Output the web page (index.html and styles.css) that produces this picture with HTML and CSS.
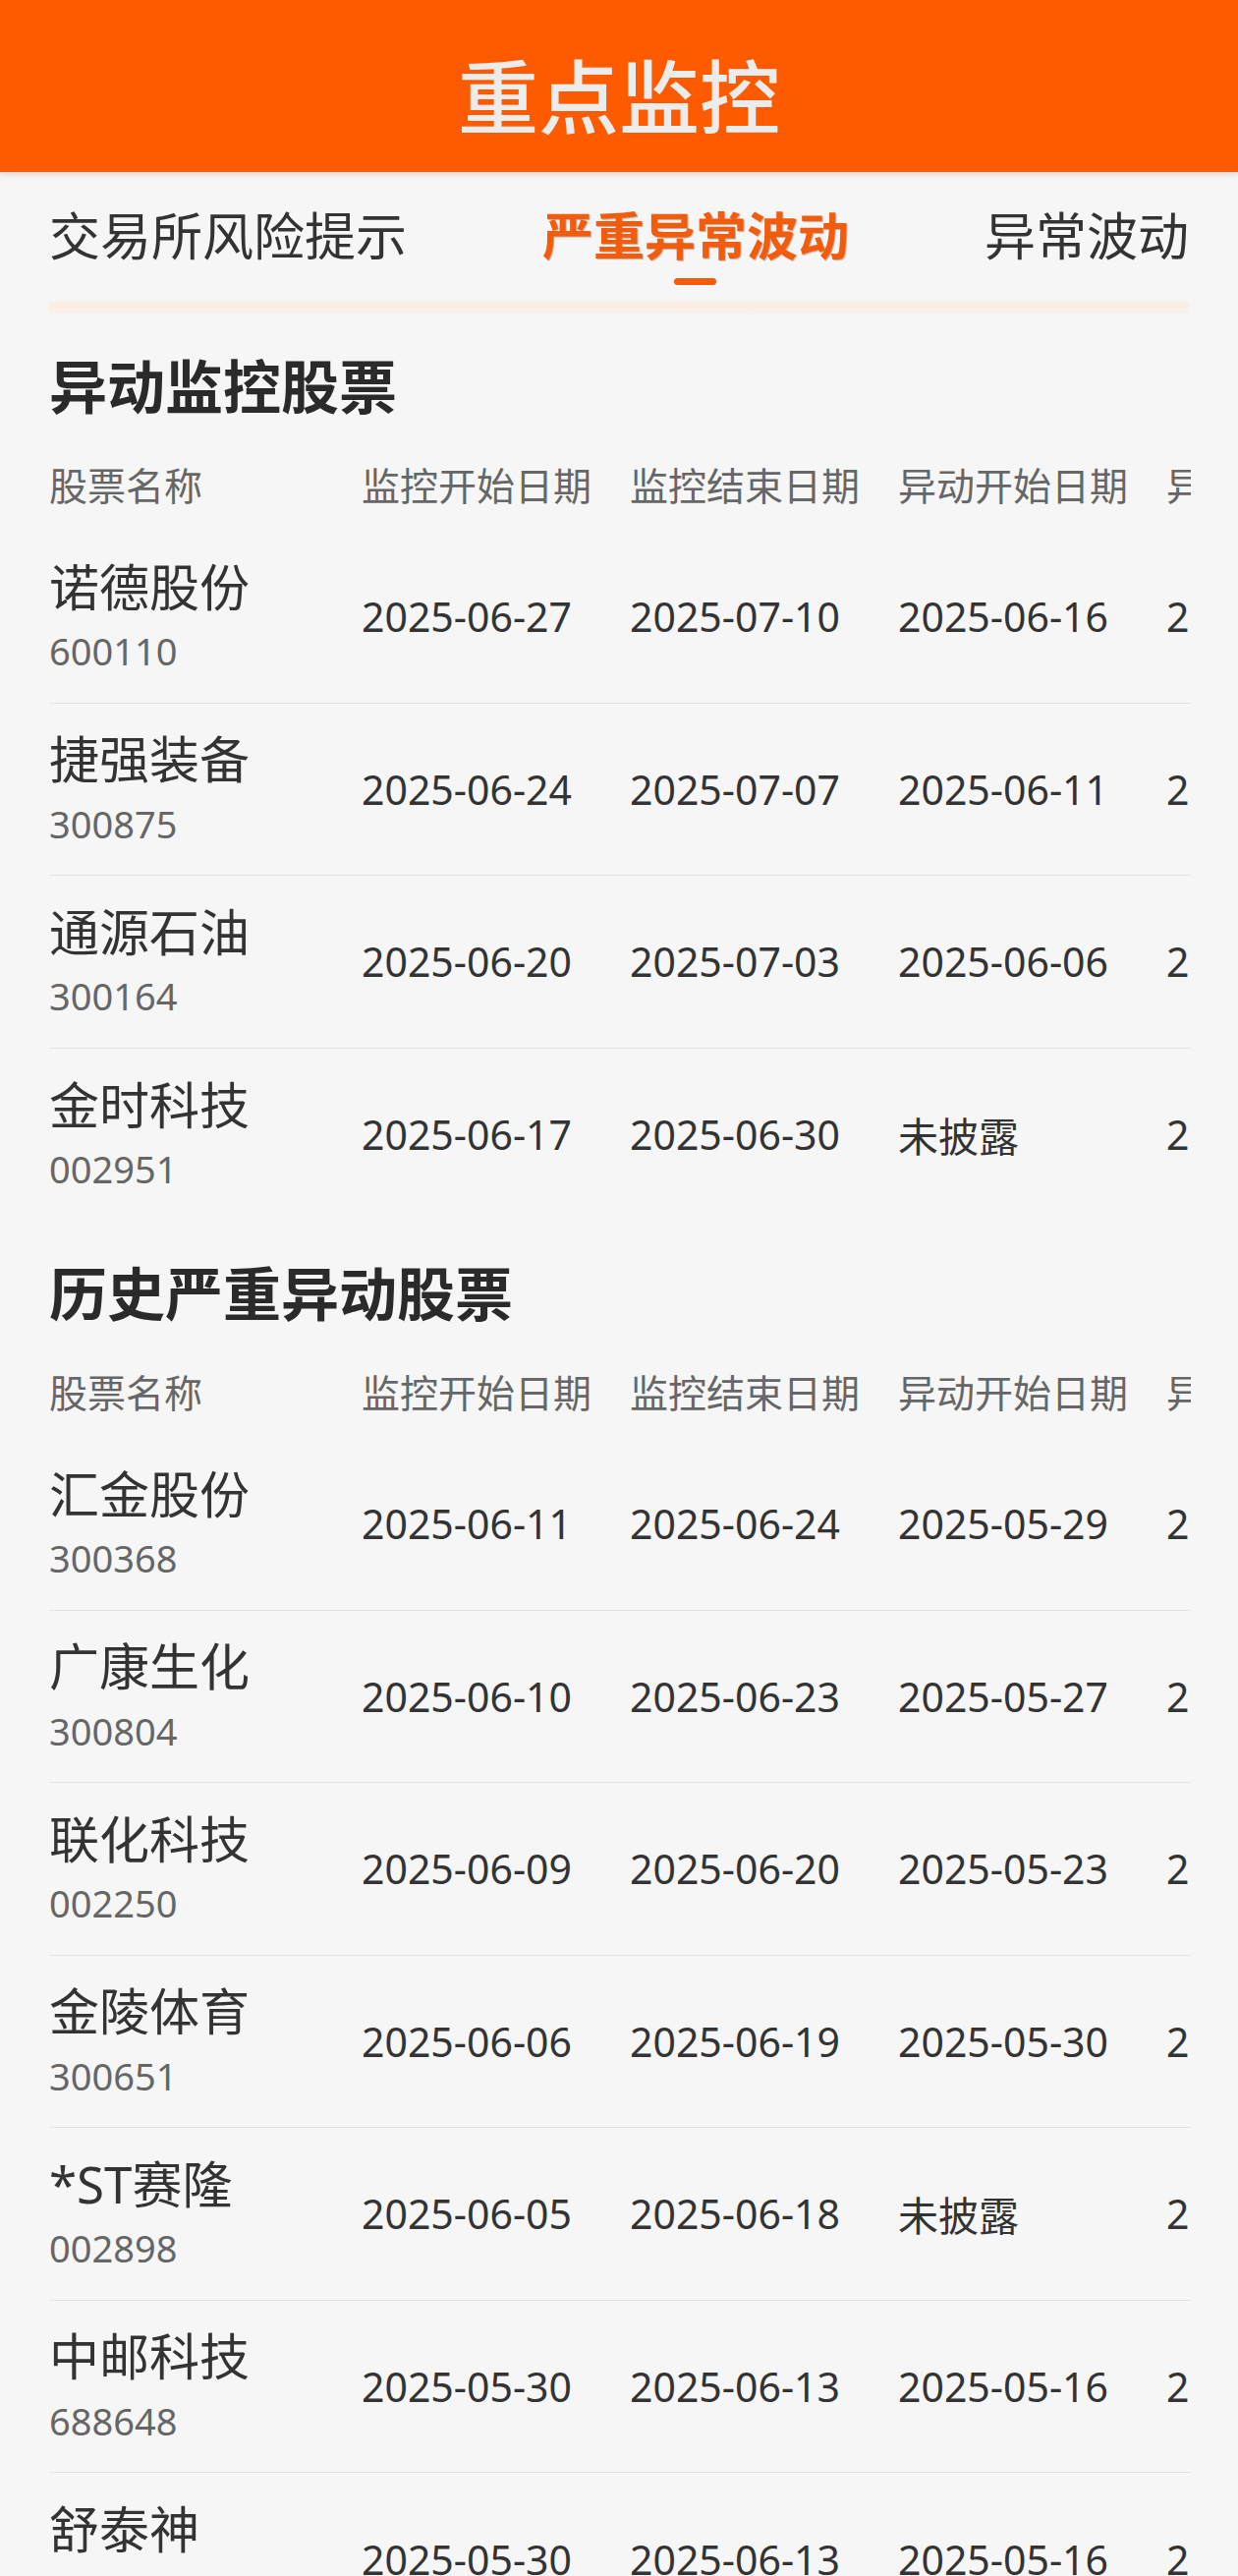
FILE: index.html
```html
<!DOCTYPE html>
<html lang="zh-CN">
<head>
<meta charset="UTF-8" />
<meta name="viewport" content="width=device-width, initial-scale=1" />
<title>重点监控</title>
<link rel="stylesheet" href="styles.css">
</head>
<body>

<header class="top-bar">重点监控</header>

<nav class="tabs">
  <a href="#" class="tab">交易所风险提示</a>
  <a href="#" class="tab active">严重异常波动</a>
  <a href="#" class="tab">异常波动</a>
</nav>
<div class="tabs-line"></div>

<section class="block">
  <h2>异动监控股票</h2>
  <div class="table">
    <div class="row head">
      <span>股票名称</span>
      <span>监控开始日期</span>
      <span>监控结束日期</span>
      <span>异动开始日期</span>
      <span>异动结束日期</span>
    </div>
    <div id="monitor-body"></div>
  </div>
</section>

<section class="block">
  <h2>历史严重异动股票</h2>
  <div class="table">
    <div class="row head">
      <span>股票名称</span>
      <span>监控开始日期</span>
      <span>监控结束日期</span>
      <span>异动开始日期</span>
      <span>异动结束日期</span>
    </div>
    <div id="history-body"></div>
  </div>
</section>

<script>
  const monitor = [
    ['诺德股份', '600110', '2025-06-27', '2025-07-10', '2025-06-16', '2025-06-26'],
    ['捷强装备', '300875', '2025-06-24', '2025-07-07', '2025-06-11', '2025-06-23'],
    ['通源石油', '300164', '2025-06-20', '2025-07-03', '2025-06-06', '2025-06-19'],
    ['金时科技', '002951', '2025-06-17', '2025-06-30', '未披露', '2025-06-16']
  ];

  const history = [
    ['汇金股份', '300368', '2025-06-11', '2025-06-24', '2025-05-29', '2025-06-10'],
    ['广康生化', '300804', '2025-06-10', '2025-06-23', '2025-05-27', '2025-06-09'],
    ['联化科技', '002250', '2025-06-09', '2025-06-20', '2025-05-23', '2025-06-06'],
    ['金陵体育', '300651', '2025-06-06', '2025-06-19', '2025-05-30', '2025-06-05'],
    ['*ST赛隆', '002898', '2025-06-05', '2025-06-18', '未披露', '2025-06-04'],
    ['中邮科技', '688648', '2025-05-30', '2025-06-13', '2025-05-16', '2025-05-29'],
    ['舒泰神', '300204', '2025-05-30', '2025-06-13', '2025-05-16', '2025-05-29']
  ];

  function renderRows(id, list) {
    const body = document.getElementById(id);
    list.forEach(item => {
      const row = document.createElement('div');
      row.className = 'row';
      row.innerHTML = `<div class="stock"><span class="name">${item[0]}</span><span class="code">${item[1]}</span></div>` +
        item.slice(2).map(d => `<span class="date">${d}</span>`).join('');
      body.appendChild(row);
    });
  }

  renderRows('monitor-body', monitor);
  renderRows('history-body', history);
</script>

</body>
</html>
```

FILE: styles.css
```css
:root {
  --orange: #fe5b00;
  --orange-text: #f25c0c;
  --bg: #f6f6f6;
  --text: #333;
  --gray: #666;
  --line: #e4e4e4;
}
* { box-sizing: border-box; }
body {
  margin: 0;
  padding: 0;
  background: var(--bg);
  font-family: "Noto Sans", "Noto Sans CJK SC", sans-serif;
  color: var(--text);
}
.top-bar {
  height: 175px;
  padding-top: 21px;
  display: flex;
  align-items: center;
  justify-content: center;
  background: var(--orange);
  color: #ececec;
  font-size: 82px;
  line-height: 82px;
  font-weight: 500;
  box-shadow: 0 3px 5px rgba(90, 40, 0, 0.12);
}
.tabs {
  display: flex;
  justify-content: space-between;
  align-items: flex-start;
  padding: 38.5px 50px 0;
  height: 132px;
}
.tab {
  display: flex;
  flex-direction: column;
  align-items: center;
  color: var(--text);
  text-decoration: none;
  font-size: 52px;
  line-height: 52px;
}
.tab.active {
  color: var(--orange-text);
  font-weight: 700;
  text-shadow: 1px 1px 1px rgba(90, 40, 10, 0.35);
}
.tab.active::after {
  content: "";
  display: block;
  width: 43px;
  height: 7px;
  margin-top: 17.5px;
  border-radius: 4px;
  background: var(--orange-text);
}
.tabs-line {
  height: 12px;
  margin: 0 50px;
  background: linear-gradient(#fbede2, #f8f1ec);
}
.block {
  padding: 44.5px 50px 0;
}
.block h2 {
  margin: 0 0 21.5px;
  font-size: 59px;
  line-height: 59px;
  font-weight: 700;
  color: #2a2a2a;
}
.table {
  width: 1162px;
  overflow: hidden;
}
.row {
  display: grid;
  grid-template-columns: 318px repeat(4, 273px);
  width: 1410px;
  height: 175.5px;
  align-items: center;
  white-space: nowrap;
  border-bottom: 1px solid var(--line);
}
.row.head {
  height: 96px;
  border-bottom: none;
  font-size: 39px;
  color: var(--gray);
}
#monitor-body .row:last-child,
#history-body .row:last-child {
  border-bottom: none;
}
.stock {
  display: flex;
  flex-direction: column;
  gap: 13.5px;
}
.name {
  font-size: 51px;
  line-height: 56px;
  color: var(--text);
}
.code {
  font-size: 38px;
  line-height: 48px;
  color: var(--gray);
}
.date {
  font-size: 41px;
  color: var(--text);
}
```
